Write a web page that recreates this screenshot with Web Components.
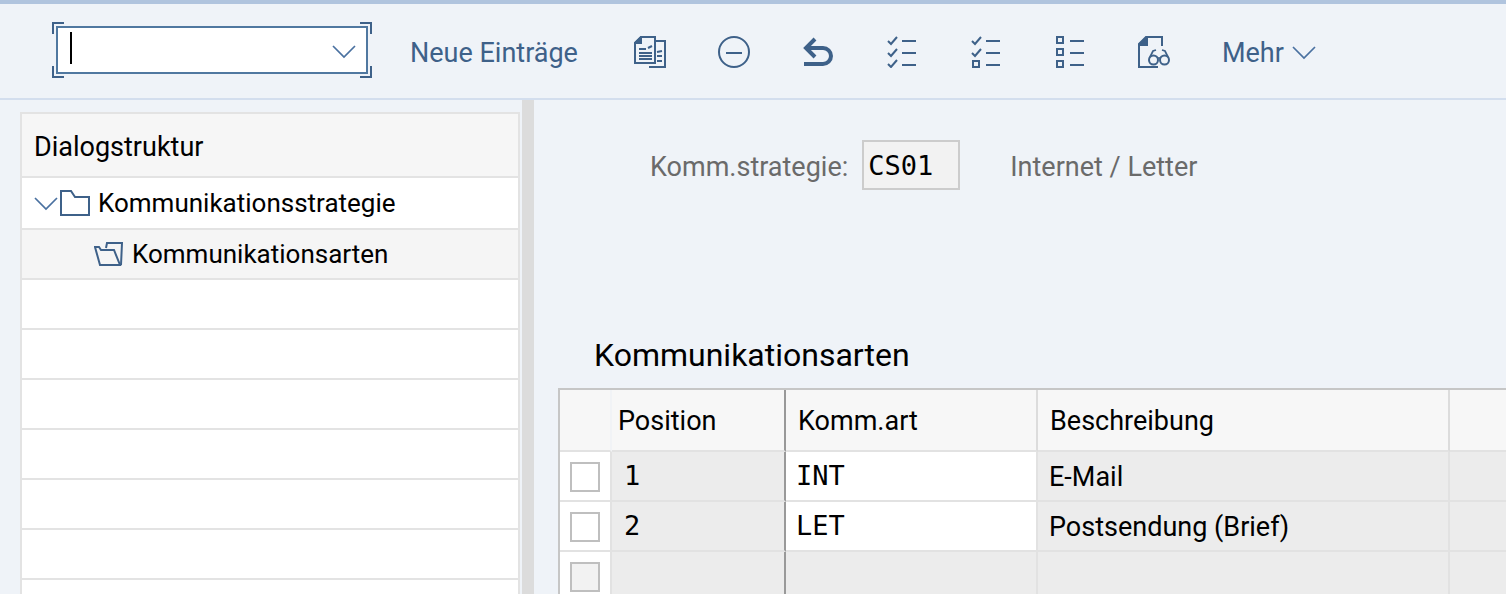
<!DOCTYPE html>
<html lang="de">
<head>
<meta charset="utf-8">
<title>Kommunikationsarten</title>
<style>
  html, body { height: 100%; margin: 0; }
  body {
    --ink: #3e6189;
    --line: #e3e3e3;
    --mono: "DejaVu Sans Mono", monospace;
    background: #eff3f8;
    color: #000;
    font: 27px/32px Roboto, "Noto Sans", sans-serif;
    overflow: hidden;
  }
</style>
</head>
<body>
<app-shell>
  <tool-bar slot="toolbar">
    <command-field></command-field>
    <tool-button class="text">Neue Einträge</tool-button>
    <tool-button icon="copy" label="Kopieren als"></tool-button>
    <tool-button icon="remove" label="Löschen"></tool-button>
    <tool-button icon="undo" label="Änderung rückgängig"></tool-button>
    <tool-button icon="all" label="Alle markieren"></tool-button>
    <tool-button icon="block" label="Block markieren"></tool-button>
    <tool-button icon="none" label="Alle entmarkieren"></tool-button>
    <tool-button icon="display" label="Anzeigen"></tool-button>
    <tool-button icon="chevron">Mehr</tool-button>
  </tool-bar>
  <tree-panel slot="side" heading="Dialogstruktur">
    <tree-row level="1" icon="folder">Kommunikationsstrategie</tree-row>
    <tree-row level="2" icon="open" selected>Kommunikationsarten</tree-row>
    <tree-row></tree-row><tree-row></tree-row><tree-row></tree-row>
    <tree-row></tree-row><tree-row></tree-row><tree-row></tree-row><tree-row></tree-row>
  </tree-panel>
  <strategy-field code="CS01" label="Komm.strategie:">Internet / Letter</strategy-field>
  <kinds-table heading="Kommunikationsarten"></kinds-table>
</app-shell>

<script>
const chevron = '<svg width="24" height="14" viewBox="0 0 24 14" fill="none" stroke="#4a71a0" stroke-width="1.7" aria-hidden="true"><path d="M1 1l11 11L23 1"/></svg>';
const check = y => `<path d="M2 ${y + 4}l3 3 6-7" stroke-width="2"/>`;
const box = y => `<rect x="3" y="${y}" width="6" height="6"/>`;
const bar = y => `<path d="M16 ${y}h14"/>`;
const svg = body => `<svg width="32" height="32" viewBox="0 0 32 32" fill="none" stroke="#3e6189" stroke-width="2" aria-hidden="true">${body}</svg>`;
const icons = {
  chevron,
  copy: svg('<path d="M7 1h14v26H1V7z"/><path d="M1 7l6-6v6z" fill="#3e6189"/><path d="M21 5h10v26H15"/><path d="M5 13h7M14 12l4-2M5 17h13M5 20h13M5 23h13M23 16l5-1M23 20h5M23 25h5"/>'),
  remove: svg('<circle cx="16" cy="16" r="15"/><path d="M8 17h16"/>'),
  undo: svg('<path d="M4 12h17a8 8 0 0 1 0 16H2M13 3L4 12l9 9" stroke-width="4"/>'),
  all: svg(check(1) + bar(5) + check(13) + bar(17) + check(24) + bar(29)),
  block: svg(check(1) + bar(5) + check(13) + bar(17) + box(25) + bar(29)),
  none: svg(box(1) + bar(5) + box(13) + bar(17) + box(25) + bar(29)),
  display: svg('<path d="M24 10V1H8L1 8v23h19"/><path d="M1 9l8-8v8z" fill="#3e6189"/><circle cx="15.5" cy="24" r="4.5"/><circle cx="26.5" cy="24" r="4.5"/><path d="M12 21l3-6 3-1M30 21l-3-6-3-1M19 22h4" stroke-width="1.7"/>'),
  folder: '<svg width="30" height="26" viewBox="0 0 30 26" fill="none" stroke="#3e6189" stroke-width="2" aria-hidden="true"><path d="M1 1h10l4 6h14v18H1z"/></svg>',
  open: '<svg width="30" height="26" viewBox="0 0 30 26" fill="none" stroke="#3e6189" stroke-width="2" aria-hidden="true"><path d="M1 6h4l2 3h13l6 15H6z"/><path d="M12 7l1-5h15l-1 22"/></svg>'
};

function define(name, render) {
  customElements.define(name, class extends HTMLElement {
    constructor() {
      super();
      this.attachShadow({ mode: 'open' });
    }
    connectedCallback() {
      this.shadowRoot.innerHTML = render(this);
    }
  });
}

define('app-shell', () => `
<style>
  :host { display: flex; flex-direction: column; height: 100vh; overflow: hidden; }
  .body { display: flex; flex: 1; min-height: 0; }
  .side { flex: none; width: 502px; padding: 12px 0 0 20px; box-sizing: content-box; overflow: hidden; }
  .split { flex: none; width: 12px; background: #dcdcdc; }
  main { flex: 1; min-width: 0; overflow: hidden; padding: 40px 0 0 24px; }
</style>
<slot name="toolbar"></slot>
<div class="body">
  <div class="side"><slot name="side"></slot></div>
  <div class="split" role="separator"></div>
  <main><slot></slot></main>
</div>`);

define('tool-bar', () => `
<style>
  :host { display: flex; align-items: center; gap: 52px; flex: none; height: 92px; padding: 0 0 2px 56px;
    border-top: 4px solid #b0c4de; border-bottom: 2px solid #d3deee; }
  ::slotted(command-field) { margin-right: -10px; }
  ::slotted(.text) { margin-right: 4px; }
</style>
<slot></slot>`);

define('command-field', () => `
<style>
  :host { display: block; position: relative; width: 312px; height: 48px; }
  .field { display: flex; align-items: center; box-sizing: border-box; height: 48px; border: 2px solid #5078a0; background: #fff; }
  input { flex: 1; min-width: 0; height: 40px; border: 0; padding: 0 12px; outline: 0; background: none; font: inherit; caret-color: transparent; }
  button { display: flex; border: 0; padding: 4px 10px 0; background: none; }
  i { position: absolute; width: 10px; height: 10px; border: 0 solid #3e6189; }
  .tl { left: -4px; top: -4px; border-width: 2px 0 0 2px; }
  .tr { right: -4px; top: -4px; border-width: 2px 2px 0 0; }
  .bl { left: -4px; bottom: -4px; border-width: 0 0 2px 2px; }
  .br { right: -4px; bottom: -4px; border-width: 0 2px 2px 0; }
  .caret { position: absolute; left: 14px; top: 6px; width: 2px; height: 32px; background: #000; }
</style>
<div class="field"><input type="text" aria-label="Transaktionscode"><button type="button" aria-label="Liste öffnen">${chevron}</button></div>
<i class="tl"></i><i class="tr"></i><i class="bl"></i><i class="br"></i><span class="caret"></span>`);

define('tool-button', el => `
<style>
  :host { display: block; flex: none; }
  button { display: flex; align-items: center; gap: 8px; border: 0; padding: 4px 0 0; background: none; color: var(--ink); font: inherit; white-space: nowrap; }
  :host(.text) button, :host([icon="chevron"]) button { padding-top: 6px; }
  svg { display: block; }
</style>
<button type="button" ${el.getAttribute('label') ? `aria-label="${el.getAttribute('label')}"` : ''}><slot></slot>${icons[el.getAttribute('icon')] || ''}</button>`);

define('tree-panel', el => `
<style>
  :host { display: block; box-sizing: border-box; width: 500px; border: 2px solid var(--line); border-bottom: 0; background: #fff; }
  header { padding: 17px 12px 13px; background: #f6f6f6; border-bottom: 2px solid var(--line); }
</style>
<header>${el.getAttribute('heading')}</header>
<div role="tree"><slot></slot></div>`);

define('tree-row', el => {
  const level = el.getAttribute('level');
  return `
<style>
  :host { display: flex; align-items: center; box-sizing: border-box; height: 50px; padding-left: 12px;
    border-bottom: 2px solid var(--line); font-size: 26px; }
  :host([level="1"]) { height: 52px; }
  :host([level="2"]) { padding-left: 72px; }
  :host([selected]) { background: #f5f5f5; }
  button { display: flex; border: 0; padding: 2px 2px 0 0; background: none; }
  svg { display: block; }
  .label { padding-left: 8px; }
</style>
${level === '1' ? `<button type="button" aria-label="Zuklappen">${chevron}</button>` : ''}${level ? icons[el.getAttribute('icon')] + '<span class="label"><slot></slot></span>' : ''}`;
});

define('strategy-field', el => `
<style>
  :host { display: flex; align-items: center; padding-left: 92px; color: #6a6a6a; }
  label, span { padding-top: 4px; }
  input { box-sizing: border-box; width: 98px; height: 50px; margin: 0 50px 0 14px; padding: 0 4px;
    border: 2px solid #ccc; border-radius: 0; background: #f2f2f2; color: #000; font: 27px/32px var(--mono); }
</style>
<label for="code">${el.getAttribute('label')}</label>
<input id="code" type="text" readonly value="${el.getAttribute('code')}">
<span><slot></slot></span>`);

define('kinds-table', el => {
  const rows = [['1', 'INT', 'E-Mail'], ['2', 'LET', 'Postsendung (Brief)'], null, null];
  return `
<style>
  :host { display: block; padding-top: 145px; }
  h2 { margin: 0; padding: 0 0 13px 36px; font-size: 32px; line-height: 40px; font-weight: 400; }
  table { width: 100%; table-layout: fixed; border-collapse: separate; border-spacing: 0;
    border: 2px solid #c6c6c6; border-width: 2px 0 0 2px; }
  th, td { box-sizing: border-box; padding: 2px 11px 0; text-align: left; font-weight: 400; white-space: nowrap;
    border: 0 solid #e2e2e2; border-width: 0 2px 2px 0; }
  th { height: 62px; padding-left: 12px; background: #f7f7f7; border-right-color: #dcdcdc; }
  td { height: 50px; background: #ececec; }
  th:last-child, td:last-child { border-right-width: 0; }
  .sel { width: 52px; padding: 2px 0 0 10px; }
  th.sel { border-right-color: #f1f3f6; }
  td.sel { background: #fff; }
  .pos { width: 174px; }
  th.pos, td.pos { border-right-color: #999; }
  th.pos { padding-left: 6px; }
  .kind { width: 252px; }
  td.kind { background: #fff; }
  .empty td.kind { background: #ececec; }
  .text { width: 412px; }
  td.pos, td.kind { padding-top: 0; padding-left: 10px; font-family: var(--mono); }
  td.pos { padding-left: 12px; }
  input { display: block; appearance: none; box-sizing: border-box; width: 30px; height: 30px; margin: 0;
    border: 2px solid #bfbfbf; background: #fff; }
  input:disabled { background: #f2f2f2; }
</style>
<h2>${el.getAttribute('heading')}</h2>
<table>
  <thead><tr><th class="sel"></th><th class="pos">Position</th><th class="kind">Komm.art</th><th class="text">Beschreibung</th><th></th></tr></thead>
  <tbody>${rows.map((r, n) => `<tr class="${r ? '' : 'empty'}"><td class="sel"><input type="checkbox" aria-label="Zeile ${n + 1} markieren" ${r ? '' : 'disabled'}></td><td class="pos">${r ? r[0] : ''}</td><td class="kind">${r ? r[1] : ''}</td><td class="text">${r ? r[2] : ''}</td><td></td></tr>`).join('')}</tbody>
</table>`;
});
</script>
</body>
</html>
